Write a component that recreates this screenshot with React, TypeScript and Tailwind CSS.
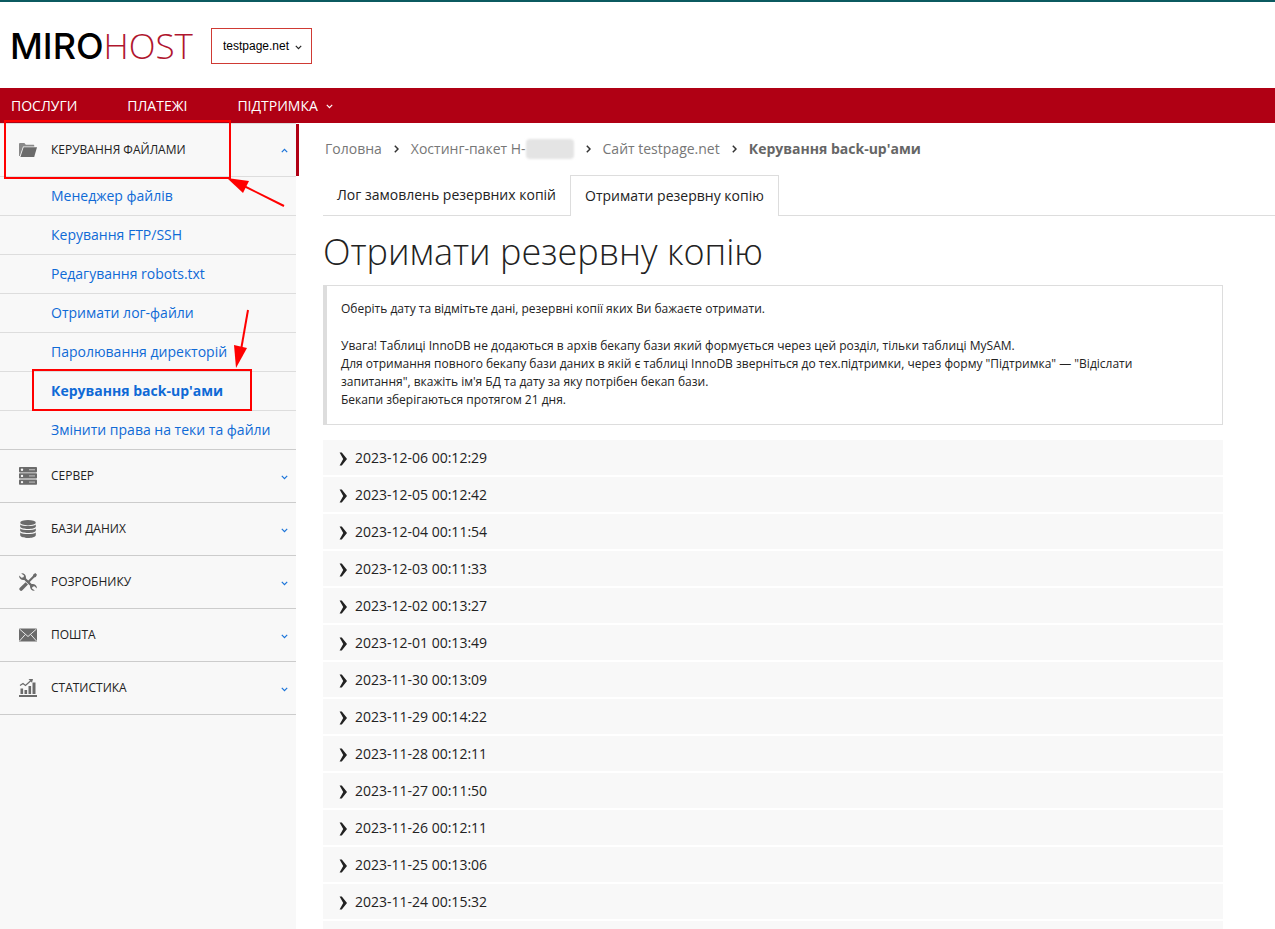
import React, { useState, ReactNode } from 'react';

const backups = [
  '2023-12-06 00:12:29',
  '2023-12-05 00:12:42',
  '2023-12-04 00:11:54',
  '2023-12-03 00:11:33',
  '2023-12-02 00:13:27',
  '2023-12-01 00:13:49',
  '2023-11-30 00:13:09',
  '2023-11-29 00:14:22',
  '2023-11-28 00:12:11',
  '2023-11-27 00:11:50',
  '2023-11-26 00:12:11',
  '2023-11-25 00:13:06',
  '2023-11-24 00:15:32',
];

const fileLinks = [
  'Менеджер файлів',
  'Керування FTP/SSH',
  'Редагування robots.txt',
  'Отримати лог-файли',
  'Паролювання директорій',
  "Керування back-up'ами",
  'Змінити права на теки та файли',
];

const Chevron: React.FC<{ className?: string }> = ({ className }) => (
  <svg viewBox="0 0 7 5" className={className} fill="none" stroke="currentColor" strokeWidth="1.2" aria-hidden="true">
    <path d="M0.8 0.9 3.5 3.6 6.2 0.9" />
  </svg>
);

const Icon: React.FC<{ children: ReactNode }> = ({ children }) => (
  <svg viewBox="0 0 18 18" className="w-[18px] h-[18px] shrink-0 text-[#6b6b6b]" fill="currentColor" aria-hidden="true">
    {children}
  </svg>
);

const FolderIcon = () => (
  <Icon>
    <path d="M0 15V3.2C0 2.5.5 2 1.2 2h4.2l1.4 1.7h7.4c.7 0 1.1.4 1.1 1.1v.7H4L.8 15z" opacity=".8" />
    <path d="M4.6 6.3H18L15.2 16H1.4z" />
  </Icon>
);

const ServerIcon = () => (
  <Icon>
    {[0, 6.2, 12.4].map((y) => (
      <g key={y}>
        <rect y={y} width="18" height="5.4" rx="0.8" />
        <circle cx="3" cy={y + 2.7} r="1.2" fill="#f8f8f8" />
        <path d={`M10 ${y + 2.7}h6`} stroke="#b5b5b5" strokeWidth="1.2" />
      </g>
    ))}
  </Icon>
);

const DatabaseIcon = () => (
  <Icon>
    <ellipse cx="9" cy="2.7" rx="7.8" ry="2.7" />
    <path d="M1.2 4.4C3 6.6 15 6.600 16.800 4.400v2.400c-1 3-14.600 3-15.600 0z" />
    <path d="M1.200 8.400c1.800 2.200 13.800 2.200 15.600 0v2.400c-1 3-14.600 3-15.600 0z" />
    <path d="M1.200 12.400c1.800 2.200 13.800 2.200 15.600 0v2.800c-1 3.700-14.600 3.700-15.600 0z" />
  </Icon>
);

const ToolsIcon = () => (
  <Icon>
    <path d="M4.6 4.6 13.6 13.6" stroke="currentColor" strokeWidth="2.2" />
    <path d="M2.2.4A4 4 0 0 1 6.8 5.4L5.2 6.9A4 4 0 0 1 .2 2.5L2.5 4.7 4.6 4.2 5 2.5z" />
    <path d="M15.8 17.6A4 4 0 0 1 11.2 12.6L12.8 11.1A4 4 0 0 1 17.8 15.5L15.5 13.3 13.4 13.8 13 15.5z" />
    <path d="m16.3 0 1.7 1.7-1.2 2.2-1.5.6-5 5-1.5-1.5 5-5 .5-1.6z" />
    <path d="m6.600 9.200 2.400 2.400-5.600 5.700c-.8.8-1.800.8-2.500 0-.8-.8-.8-1.700 0-2.500z" />
  </Icon>
);

const MailIcon = () => (
  <Icon>
    <rect y="2.5" width="18" height="13" rx="0.6" />
    <path d="M.5 3 9 10.5 17.5 3M.5 15 6.4 8.4M17.5 15 11.6 8.4" fill="none" stroke="#e6e6e6" strokeWidth="1" />
  </Icon>
);

const StatsIcon = () => (
  <Icon>
    <path d="M0 16h18v2H0zM1.500 9.500h2.600V15H1.500zM5.500 11h2.600v4H5.500zM9.500 7h2.600v8H9.500zM13.500 3.500h3V15h-3z" />
    <path d="M1 6.500 4 4.500 6.500 6.500 12 1.500" fill="none" stroke="currentColor" strokeWidth="1.2" />
    <path d="M9.500 0H14L13 3.800z" />
  </Icon>
);

const sections = [
  { title: 'Сервер', icon: <ServerIcon /> },
  { title: 'Бази даних', icon: <DatabaseIcon /> },
  { title: 'Розробнику', icon: <ToolsIcon /> },
  { title: 'Пошта', icon: <MailIcon /> },
  { title: 'Статистика', icon: <StatsIcon /> },
];

interface SectionButtonProps {
  title: string;
  icon: ReactNode;
  open?: boolean;
  onClick?: () => void;
}

const SectionButton: React.FC<SectionButtonProps> = ({ title, icon, open, onClick }) => (
  <button
    type="button"
    aria-expanded={!!open}
    onClick={onClick}
    className="flex items-center w-full h-[52px] pl-[19px] pr-2 text-xs uppercase text-[#222]"
  >
    {icon}
    <span className="ml-[14px] flex-1 text-left">{title}</span>
    <Chevron className={open ? 'w-[7px] h-[5px] text-[#1a73d9] rotate-180' : 'w-[7px] h-[5px] mt-[3px] text-[#1a73d9]'} />
  </button>
);

const Header = () => (
  <header>
    <div className="flex items-center h-[88px] border-t-2 border-[#0b5a60] pt-[2px] pl-[10px] gap-5">
      <a href="#" className="flex items-baseline w-[181px] leading-9 whitespace-nowrap">
        <span className="font-['Inter'] text-[36px] font-medium text-black">MIRO</span>
        <span className="font-['Open_Sans'] text-[35px] font-light text-[#b0162e]">HOST</span>
      </a>
      <div className="relative flex items-center">
        <select
          aria-label="Сайт"
          className="appearance-none h-9 w-[101px] pl-[11px] bg-white border border-[#cf3a34] font-['Liberation_Sans',sans-serif] text-xs text-black"
        >
          <option>testpage.net</option>
        </select>
        <Chevron className="absolute right-[10px] top-[17px] w-[7px] h-[5px] text-[#222] pointer-events-none" />
      </div>
    </div>
    <nav className="flex items-center h-[35px] gap-[50px] bg-[#b00014] pl-[11px] text-sm uppercase text-white">
      <a href="#">Послуги</a>
      <a href="#">Платежі</a>
      <button type="button" className="flex items-center gap-2 uppercase">
        Підтримка
        <Chevron className="w-[7px] h-[5px] mt-[2px]" />
      </button>
    </nav>
  </header>
);

const Sidebar = () => {
  const [isOpen, setIsOpen] = useState(true);

  return (
    <aside className="w-[296px] shrink-0 bg-[#f8f8f8] border-t border-[#ddd]">
      <div className="relative">
        <SectionButton title="Керування файлами" icon={<FolderIcon />} open={isOpen} onClick={() => setIsOpen(!isOpen)} />
        <span className="absolute left-full top-0 w-[3px] h-full bg-[#b00014]" />
      </div>
      {isOpen && (
        <ul>
          {fileLinks.map((link, i) => (
            <li key={link} className="flex items-center h-[39px] border-t border-[#ddd] pl-[51px] text-sm text-[#0f6ad6]">
              <a href="#" className={i === 5 ? 'font-bold' : ''}>{link}</a>
            </li>
          ))}
        </ul>
      )}
      <div className="border-b border-[#ccc]">
        {sections.map((section) => (
          <div key={section.title} className="border-t border-[#ccc]">
            <SectionButton title={section.title} icon={section.icon} />
          </div>
        ))}
      </div>
    </aside>
  );
};

const Separator = () => (
  <svg viewBox="0 0 5 8" className="w-[5px] h-2 text-[#333]" fill="none" stroke="currentColor" strokeWidth="1.5" aria-hidden="true">
    <path d="M0.8 0.8 4 4 0.8 7.2" />
  </svg>
);

const Breadcrumbs = () => (
  <nav className="flex items-center h-5 gap-3 pl-[2px] text-sm text-[#777]">
    <a href="#">Головна</a>
    <Separator />
    <a href="#" className="flex items-center">
      Хостинг-пакет H-
      <span className="w-12 h-5 rounded-sm bg-[#e4e4e4] blur-[1px]" />
    </a>
    <Separator />
    <a href="#">Сайт testpage.net</a>
    <Separator />
    <span className="font-bold text-[#666]">Керування back-up'ами</span>
  </nav>
);

// red frames and arrows drawn over the page
const Marks = () => (
  <svg width="300" height="420" className="absolute left-0 top-0 pointer-events-none" fill="none" stroke="#f00" strokeWidth="2" aria-hidden="true">
    <rect x="5" y="121" width="225" height="57" />
    <path d="M284 206 240 184" />
    <path d="M227 178 249 181 243 193z" fill="#f00" stroke="none" />
    <rect x="33" y="370" width="218" height="40" />
    <path d="M248 310 241 350" />
    <path d="M236 368 234 345 247 348z" fill="#f00" stroke="none" />
  </svg>
);

const App: React.FC = () => {
  return (
    <div className="relative flex flex-col min-h-screen bg-white font-['Open_Sans','Noto_Sans',sans-serif] text-[#222]">
      <Header />
      <div className="flex flex-1">
        <Sidebar />
        <main className="flex-1 min-w-0 pl-[27px] pt-4">
          <Breadcrumbs />

          <div role="tablist" className="flex h-[41px] mt-4 text-sm">
            <button type="button" role="tab" aria-selected="false" className="px-[14px] border-b border-[#ddd] whitespace-nowrap">
              Лог замовлень резервних копій
            </button>
            <button type="button" role="tab" aria-selected="true" className="px-[14px] border border-b-0 border-[#ddd] whitespace-nowrap">
              Отримати резервну копію
            </button>
            <span className="flex-1 border-b border-[#ddd]" />
          </div>

          <div className="max-w-[900px]">
            <h1 className="h-[69px] pt-3 text-[36px] leading-[48px] font-light">Отримати резервну копію</h1>

            <div className="min-h-[140px] pl-[14px] pr-8 pt-[14px] border border-l-4 border-[#ddd] text-xs leading-[18px]">
              <p className="mb-[19px]">Оберіть дату та відмітьте дані, резервні копії яких Ви бажаєте отримати.</p>
              <p>
                Увага! Таблиці InnoDB не додаються в архів бекапу бази який формується через цей розділ, тільки таблиці MySAM.
                <br />
                Для отримання повного бекапу бази даних в якій є таблиці InnoDB зверніться до тех.підтримки, через форму "Підтримка" — "Відіслати запитання", вкажіть ім'я БД та дату за яку потрібен бекап бази.
                <br />
                Бекапи зберігаються протягом 21 дня.
              </p>
            </div>

            <ul className="flex flex-col gap-[2px] mt-[15px]">
              {backups.map((date) => (
                <li key={date} className="bg-[#f8f8f8]">
                  <button type="button" className="flex items-center w-full h-[35px] pl-4 gap-2 text-sm">
                    <svg viewBox="0 0 8 14" className="w-2 h-[14px] mt-[3px]" fill="currentColor" aria-hidden="true">
                      <path d="M0.6 0.500H2.800L8 7 2.800 13.500H0.600L4.200 7z" />
                    </svg>
                    {date}
                  </button>
                </li>
              ))}
              <li className="h-2 bg-[#f8f8f8]" />
            </ul>
          </div>
        </main>
      </div>
      <Marks />
    </div>
  );
};

export default App;
